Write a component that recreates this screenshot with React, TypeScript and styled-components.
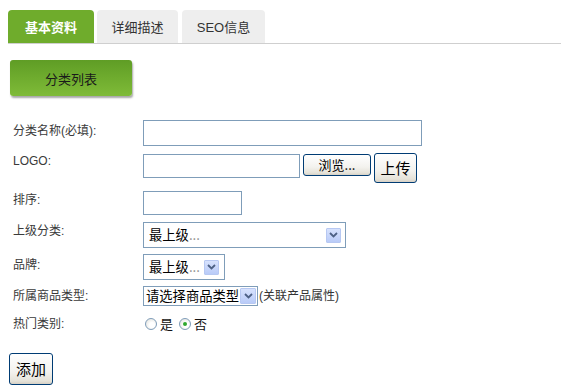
import React from "react";
import styled, { createGlobalStyle, css } from "styled-components";

const Global = createGlobalStyle`
  html, body { margin: 0; padding: 0; background: #fff; }
  body {
    font-family: "Liberation Sans", "Noto Sans CJK SC", sans-serif;
    font-size: 12px;
    color: #333;
  }
  * { box-sizing: border-box; }
`;

const Page = styled.div`
  width: 561px;
  height: 391px;
  padding-top: 10px;
  overflow: hidden;
`;

const TabBar = styled.div`
  display: flex;
  align-items: flex-end;
  margin-left: 8px;
  border-bottom: 1px solid #cfcfcf;
  height: 34px;
`;

const Tab = styled.div<{ $active?: boolean; $w: number; $ml?: number }>`
  width: ${(p) => p.$w}px;
  margin-left: ${(p) => p.$ml ?? 0}px;
  height: 33px;
  display: flex;
  align-items: center;
  justify-content: center;
  border-radius: 4px 4px 0 0;
  font-size: 13px;
  ${(p) =>
    p.$active
      ? css`
          background: #6fac2c;
          color: #fff;
          font-weight: bold;
        `
      : css`
          background: #eeeeee;
          color: #333;
        `}
`;

const ListButton = styled.div`
  margin: 16px 0 0 10px;
  width: 122px;
  height: 36px;
  border-radius: 3px;
  background: linear-gradient(#5f9d25, #7fbb38);
  box-shadow: 1px 2px 2px rgba(0, 0, 0, 0.35);
  display: flex;
  align-items: center;
  justify-content: center;
  font-size: 13px;
  color: #1a1a1a;
`;

const Form = styled.div`
  display: flex;
  flex-direction: column;
  margin-top: 24px;
`;

const Row = styled.div<{ $mt?: number; $h: number }>`
  display: flex;
  align-items: flex-start;
  margin-top: ${(p) => p.$mt ?? 0}px;
  height: ${(p) => p.$h}px;
`;

const Label = styled.div<{ $pt?: number }>`
  width: 143px;
  padding-left: 13px;
  padding-top: ${(p) => p.$pt ?? 2}px;
  line-height: 16px;
  font-size: 12px;
  color: #3a3a3a;
  white-space: nowrap;
`;

const Field = styled.div`
  display: flex;
  align-items: flex-start;
  gap: 3px;
`;

const TextBox = styled.div<{ $w: number; $h: number; $mt?: number }>`
  width: ${(p) => p.$w}px;
  height: ${(p) => p.$h}px;
  margin-top: ${(p) => p.$mt ?? 0}px;
  border: 1px solid #7f9db9;
  background: #fff;
`;

const XpButton = styled.div<{ $w: number; $h: number; $mt?: number; $fs: number }>`
  width: ${(p) => p.$w}px;
  height: ${(p) => p.$h}px;
  margin-top: ${(p) => p.$mt ?? 0}px;
  border: 1px solid #003c74;
  border-radius: 3px;
  background: linear-gradient(#ffffff, #f3f2ee 60%, #e5e2d8 90%, #d6d0c5);
  display: flex;
  align-items: center;
  justify-content: center;
  font-size: ${(p) => p.$fs}px;
  line-height: 1.2;
  color: #000;
  white-space: nowrap;
  font-family: "Noto Sans CJK SC", sans-serif;
`;

const Select = styled.div<{ $w: number; $h: number; $inset: number }>`
  width: ${(p) => p.$w}px;
  height: ${(p) => p.$h}px;
  border: 1px solid #7f9db9;
  background: #fff;
  display: flex;
  align-items: center;
  justify-content: space-between;
  padding-left: ${(p) => (p.$inset > 2 ? 5 : 2)}px;
  padding-right: ${(p) => p.$inset}px;
  font-size: 13.3px;
  color: #000;
  font-family: "Noto Sans CJK SC", sans-serif;
`;

const SelectText = styled.span`
  white-space: nowrap;
  line-height: 1.2;
`;

const Dots = styled.span`
  color: #8a8a8a;
`;

const Arrow = styled.div<{ $s: number }>`
  width: ${(p) => p.$s}px;
  height: ${(p) => p.$s}px;
  border: 1px solid #b7c8f2;
  border-radius: 1px;
  background: linear-gradient(#d7e2fd, #b9cbf8);
  display: flex;
  align-items: center;
  justify-content: center;
  flex-shrink: 0;
`;

const Note = styled.span`
  font-size: 12px;
  color: #333;
  margin-left: 1px;
  line-height: 19px;
  white-space: nowrap;
`;

const Inline = styled.div`
  display: flex;
  align-items: center;
`;

const Radio = styled.div<{ $checked?: boolean; $ml?: number }>`
  width: 12px;
  height: 12px;
  margin-left: ${(p) => p.$ml ?? 0}px;
  border-radius: 50%;
  border: 1px solid #7f9db9;
  background: radial-gradient(circle at 60% 60%, #fff 30%, #dcdcd6 100%);
  display: flex;
  align-items: center;
  justify-content: center;
  &::after {
    content: "";
    width: 4px;
    height: 4px;
    border-radius: 50%;
    background: ${(p) => (p.$checked ? "#2fa82f" : "transparent")};
  }
`;

const RadioText = styled.span<{ $mr?: number }>`
  font-size: 13px;
  color: #111;
  margin-left: 3px;
  margin-right: ${(p) => p.$mr ?? 0}px;
  font-family: "Noto Sans CJK SC", sans-serif;
  line-height: 1.2;
`;

const Submit = styled(XpButton)`
  margin-left: 9px;
`;

const Chevron = () => (
  <svg width="9" height="6" viewBox="0 0 9 6">
    <path d="M1 1 L4.5 4.5 L8 1" fill="none" stroke="#4d6185" strokeWidth="1.8" />
  </svg>
);

const DropDown: React.FC<{ w: number; h: number; inset: number; arrow: number; children: React.ReactNode }> = ({
  w,
  h,
  inset,
  arrow,
  children,
}) => (
  <Select $w={w} $h={h} $inset={inset}>
    <SelectText>{children}</SelectText>
    <Arrow $s={arrow}>
      <Chevron />
    </Arrow>
  </Select>
);

export default function App() {
  return (
    <>
      <Global />
      <Page>
        <TabBar>
          <Tab $active $w={86}>基本资料</Tab>
          <Tab $w={81} $ml={3}>详细描述</Tab>
          <Tab $w={83} $ml={4}>SEO信息</Tab>
        </TabBar>
        <ListButton>分类列表</ListButton>
        <Form>
          <Row $h={26}>
            <Label $pt={3}>分类名称(必填):</Label>
            <TextBox $w={279} $h={26} />
          </Row>
          <Row $h={30} $mt={7}>
            <Label $pt={0}>LOGO:</Label>
            <Field>
              <TextBox $w={157} $h={24} $mt={1} />
              <XpButton $w={68} $h={22} $mt={1} $fs={13}>浏览...</XpButton>
              <XpButton $w={43} $h={30} $fs={15}>上传</XpButton>
            </Field>
          </Row>
          <Row $h={24} $mt={8}>
            <Label $pt={1}>排序:</Label>
            <TextBox $w={99} $h={24} />
          </Row>
          <Row $h={26} $mt={7}>
            <Label $pt={1}>上级分类:</Label>
            <DropDown w={203} h={26} inset={4} arrow={15}>
              最上级<Dots>...</Dots>
            </DropDown>
          </Row>
          <Row $h={26} $mt={6}>
            <Label $pt={3}>品牌:</Label>
            <DropDown w={82} h={26} inset={5} arrow={15}>
              最上级<Dots>...</Dots>
            </DropDown>
          </Row>
          <Row $h={20} $mt={6}>
            <Label $pt={2}>所属商品类型:</Label>
            <Inline>
              <DropDown w={115} h={20} inset={1} arrow={16}>
                请选择商品类型
              </DropDown>
              <Note>(关联产品属性)</Note>
            </Inline>
          </Row>
          <Row $h={16} $mt={10}>
            <Label $pt={0}>热门类别:</Label>
            <Inline>
              <Radio $ml={2} />
              <RadioText $mr={6}>是</RadioText>
              <Radio $checked />
              <RadioText>否</RadioText>
            </Inline>
          </Row>
          <Row $h={32} $mt={21}>
            <Submit $w={44} $h={32} $fs={15}>添加</Submit>
          </Row>
        </Form>
      </Page>
    </>
  );
}
